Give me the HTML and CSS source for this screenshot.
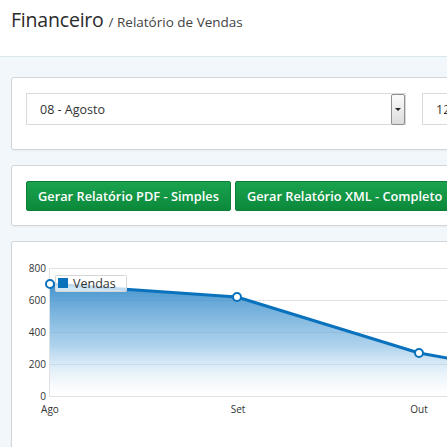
FILE: index.html
```html
<!DOCTYPE html>
<html lang="pt-BR">
<head>
    <meta charset="UTF-8">
    <meta name="viewport" content="width=device-width, initial-scale=1.0">
    <title>Financeiro - Relatório de Vendas</title>
    <link rel="stylesheet" href="styles.css">
</head>
<body>
    <header class="page-header">
        <h1>Financeiro <small>/ Relatório de Vendas</small></h1>
    </header>

    <main class="content">
        <section class="panel filters">
            <div class="select wide">
                <span class="select-value">08 - Agosto</span>
                <span class="select-arrow"></span>
            </div>
            <div class="select">
                <span class="select-value">12 - Dezembro</span>
                <span class="select-arrow"></span>
            </div>
        </section>

        <section class="panel actions">
            <button class="btn-green">Gerar Relatório PDF - Simples</button>
            <button class="btn-green">Gerar Relatório XML - Completo</button>
        </section>

        <section class="panel chart-panel">
            <svg class="chart" width="620" height="210" viewBox="0 0 620 210">
                <defs>
                    <linearGradient id="areaFill" x1="0" y1="0" x2="0" y2="1">
                        <stop offset="0" stop-color="#2f88c8" stop-opacity="0.9"/>
                        <stop offset="0.55" stop-color="#78b4e0" stop-opacity="0.6"/>
                        <stop offset="1" stop-color="#ffffff" stop-opacity="0.2"/>
                    </linearGradient>
                </defs>

                <!-- grid -->
                <g class="grid">
                    <line x1="37" y1="26" x2="620" y2="26"/>
                    <line x1="37" y1="58" x2="620" y2="58"/>
                    <line x1="37" y1="90" x2="620" y2="90"/>
                    <line x1="37" y1="122" x2="620" y2="122"/>
                    <line x1="37" y1="154" x2="620" y2="154"/>
                    <line x1="37" y1="26" x2="37" y2="154"/>
                </g>

                <!-- area -->
                <path d="M38 42 L225 55 L407 111 L589 143 L589 154 L38 154 Z" fill="url(#areaFill)"/>

                <g class="y-labels">
                    <text x="34" y="30">800</text>
                    <text x="34" y="62">600</text>
                    <text x="34" y="94">400</text>
                    <text x="34" y="126">200</text>
                    <text x="34" y="158">0</text>
                </g>

                <g class="x-labels">
                    <text x="38" y="171">Ago</text>
                    <text x="226" y="171">Set</text>
                    <text x="407" y="171">Out</text>
                </g>

                <path class="line" d="M38 42 L225 55 L407 111 L589 143"/>

                <!-- legend -->
                <g class="legend">
                    <rect x="43.5" y="33.5" width="71" height="16" rx="1"/>
                    <rect class="swatch" x="46" y="36" width="10" height="10"/>
                    <text x="61" y="46">Vendas</text>
                </g>

                <g class="points">
                    <circle cx="38" cy="42" r="4"/>
                    <circle cx="225" cy="55" r="4"/>
                    <circle cx="407" cy="111" r="4"/>
                    <circle cx="589" cy="143" r="4"/>
                </g>
            </svg>
        </section>
    </main>
</body>
</html>
```

FILE: styles.css
```css
body {
    font-family: 'Open Sans', 'Noto Sans', sans-serif;
    background-color: #f2f7fb;
    color: #333;
    margin: 0;
    padding: 0;
    overflow: hidden;
}

.page-header {
    background-color: #ffffff;
    border-bottom: 1px solid #d9e6ee;
    height: 56px;
    padding: 0 11px;
}

h1 {
    margin: 0;
    padding-top: 6px;
    font-size: 19.5px;
    font-weight: normal;
    color: #2b2b2b;
    letter-spacing: -0.2px;
}

h1 small {
    font-size: 13.5px;
    color: #444;
    letter-spacing: 0;
}

.content {
    padding: 20px 0 0 11px;
    width: 640px;
}

.panel {
    background-color: #ffffff;
    border: 1px solid #d3d6d9;
    border-radius: 3px;
    box-shadow: 0 1px 2px rgba(0, 0, 0, 0.05);
    margin-bottom: 15px;
}

.filters {
    display: flex;
    gap: 16px;
    padding: 15px 14px 24px;
}

.select {
    display: flex;
    align-items: center;
    height: 30px;
    width: 200px;
    border: 1px solid #dadada;
    background-color: #ffffff;
    font-size: 12.5px;
    color: #333;
}

.select.wide {
    width: 378px;
}

.select-value {
    flex: 1;
    padding-left: 13px;
    white-space: nowrap;
    overflow: hidden;
}

.select-arrow {
    position: relative;
    width: 12px;
    height: 29px;
    border: 1px solid #8e8e8e;
    border-radius: 2px;
    background: linear-gradient(#fbfbfb, #dcdcdc);
}

.select-arrow::after {
    content: "";
    position: absolute;
    left: 3px;
    top: 13px;
    border-left: 3px solid transparent;
    border-right: 3px solid transparent;
    border-top: 3px solid #222;
}

.actions {
    display: flex;
    gap: 4px;
    padding: 15px 14px 14px;
}

.btn-green {
    font-family: 'Open Sans', 'Noto Sans', sans-serif;
    font-size: 12.8px;
    font-weight: 600;
    color: #ffffff;
    background: linear-gradient(#1aa34e, #0c893b);
    border: 1px solid #0b7d36;
    border-radius: 2px;
    height: 30px;
    padding: 0 11px;
    white-space: nowrap;
    cursor: pointer;
}

.chart-panel {
    height: 240px;
}

.chart {
    display: block;
}

.grid line {
    stroke: #dfe2e5;
    stroke-width: 1;
    shape-rendering: crispEdges;
}

.y-labels text {
    font-size: 10px;
    fill: #333;
    text-anchor: end;
}

.x-labels text {
    font-size: 10px;
    fill: #333;
    text-anchor: middle;
}

.line {
    fill: none;
    stroke: #0a72bd;
    stroke-width: 3;
    stroke-linejoin: round;
}

.legend rect {
    fill: rgba(255, 255, 255, 0.75);
    stroke: #d6d6d6;
}

.legend .swatch {
    fill: #0a72bd;
    stroke: none;
}

.legend text {
    font-size: 12.5px;
    fill: #333;
}

.points circle {
    fill: #ffffff;
    stroke: #0a72bd;
    stroke-width: 2;
}
```
